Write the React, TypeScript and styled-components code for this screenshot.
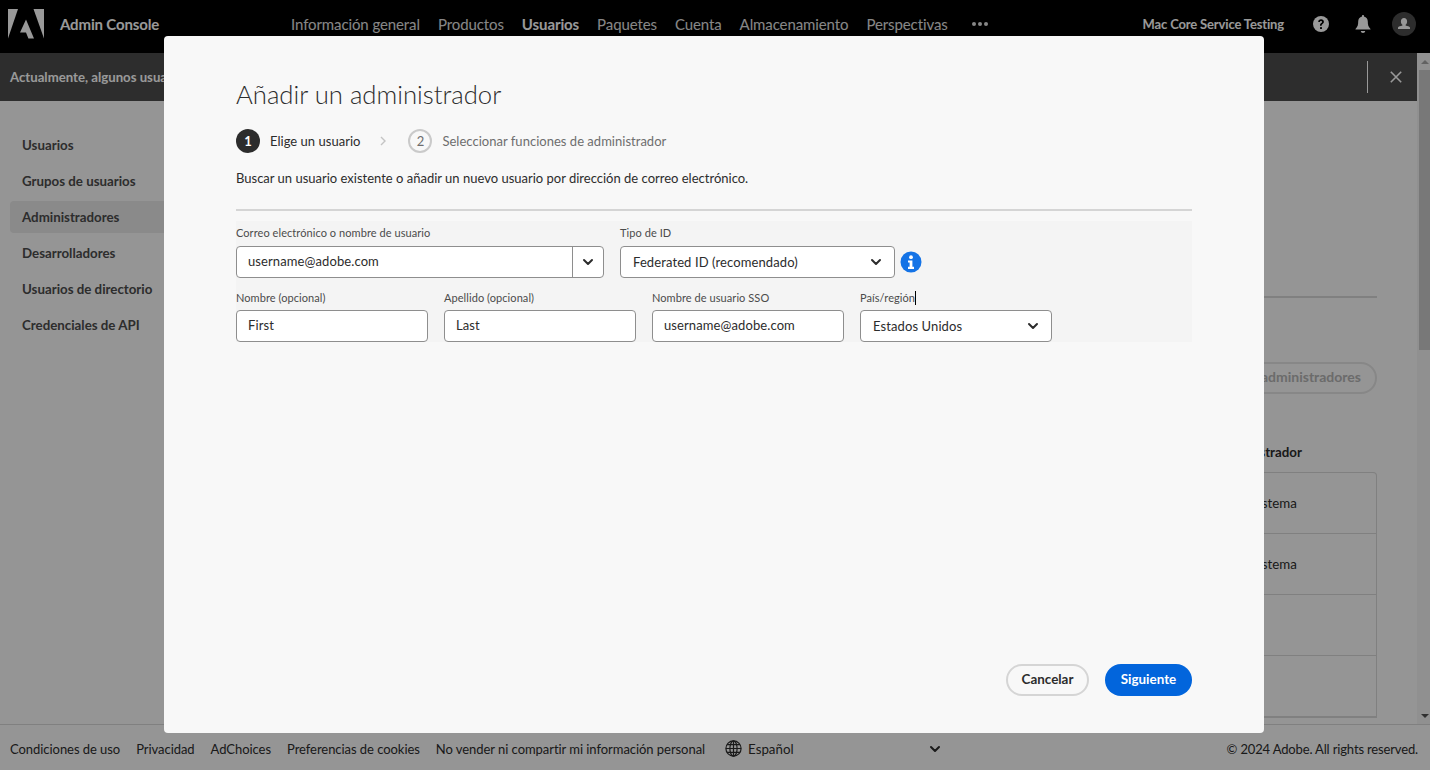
import React from 'react';
import styled, { createGlobalStyle } from 'styled-components';

const FONT = `Lato, "Noto Sans", sans-serif`;

const GlobalStyle = createGlobalStyle`
  html, body {
    margin: 0;
    padding: 0;
    height: 100%;
    overflow: hidden;
    background: #f8f8f8;
    font-family: ${FONT};
  }
  * {
    box-sizing: border-box;
  }
`;

const navItems = ['Información general', 'Productos', 'Usuarios', 'Paquetes', 'Cuenta', 'Almacenamiento', 'Perspectivas'];
const sideItems = ['Usuarios', 'Grupos de usuarios', 'Administradores', 'Desarrolladores', 'Usuarios de directorio', 'Credenciales de API'];
const footerLinks = ['Condiciones de uso', 'Privacidad', 'AdChoices', 'Preferencias de cookies', 'No vender ni compartir mi información personal'];
const tableRows = ['Administrador del sistema', 'Administrador del sistema', '', ''];

const Chevron = () => (
  <svg width="12" height="8" viewBox="0 0 12 8" fill="none">
    <path d="M2 2l4 4 4-4" stroke="#2c2c2c" strokeWidth="2" strokeLinecap="round" strokeLinejoin="round" />
  </svg>
);

const AdobeLogo = () => (
  <svg width="36" height="30" viewBox="0 0 36 30" fill="#fff">
    <path d="M0 0h10L0 29.5z" />
    <path d="M25.5 0H36v29.5z" />
    <path d="M18 10.5l8 19h-5.6l-2.4-6h-6z" />
  </svg>
);

const App: React.FC = () => {
  return (
    <Page>
      <GlobalStyle />
      <TopBar>
        <LogoLink>
          <AdobeLogo />
        </LogoLink>
        <Brand>Admin Console</Brand>
        <Nav>
          {navItems.map((item) => (
            <NavItem key={item} active={item === 'Usuarios'}>
              {item}
            </NavItem>
          ))}
          <MoreDots>
            <i />
            <i />
            <i />
          </MoreDots>
        </Nav>
        <TopRight>
          <OrgName>Mac Core Service Testing</OrgName>
          <svg width="18" height="18" viewBox="0 0 18 18">
            <circle cx="9" cy="9" r="8" fill="#fff" />
            <path d="M6.2 7c0-1.7 1.2-2.7 2.9-2.7s2.8 1 2.8 2.4c0 1.1-.6 1.7-1.4 2.3-.6.4-.9.8-.9 1.5v.3H8v-.5c0-1 .4-1.6 1.2-2.2.6-.4.8-.7.8-1.2 0-.6-.4-1-1-1-.7 0-1 .5-1.1 1.1z" fill="#000" />
            <rect x="8" y="12" width="2" height="2" rx=".4" fill="#000" />
          </svg>
          <BellWrap>
            <svg width="16" height="18" viewBox="0 0 16 18" fill="#fff">
              <path d="M8 0c.6 0 1 .4 1 1v.6c2.4.5 3.8 2.4 3.8 5 0 3.6.5 5 2.7 7.4v.6H.5V14c2.2-2.4 2.7-3.8 2.7-7.4 0-2.6 1.4-4.5 3.8-5V1c0-.6.4-1 1-1z" />
              <path d="M5.8 16h4.4c0 1.2-1 2-2.2 2s-2.2-.8-2.2-2z" />
            </svg>
          </BellWrap>
          <Avatar>
            <svg width="14" height="14" viewBox="0 0 14 14" fill="#fff">
              <path d="M7 1c1.9 0 3.1 1.4 3.1 3.4 0 1.4-.6 2.6-1.5 3.3v.9c1.9.5 3.9 1.2 4.4 1.8V12H1v-1.6c.5-.6 2.5-1.3 4.4-1.8v-.9c-.9-.7-1.5-1.9-1.5-3.3C3.9 2.4 5.1 1 7 1z" />
            </svg>
          </Avatar>
        </TopRight>
      </TopBar>
      <Middle>
        <Scroller>
          <Banner>
            <BannerText>Actualmente, algunos usuarios</BannerText>
            <BannerDivider />
            <BannerClose>
              <svg width="12" height="12" viewBox="0 0 12 12" stroke="#fff" strokeWidth="1.6">
                <path d="M.8.8l10.4 10.4M11.2.8.8 11.2" />
              </svg>
            </BannerClose>
          </Banner>
          <Columns>
            <Sidebar>
              {sideItems.map((item) => (
                <SideItem key={item} active={item === 'Administradores'}>
                  {item}
                </SideItem>
              ))}
            </Sidebar>
            <Main>
              <MainRule />
              <GhostButton>Añadir administradores</GhostButton>
              <TableHead>Tipo de administrador</TableHead>
              <Table>
                {tableRows.map((text, i) => (
                  <TableRow key={i}>{text}</TableRow>
                ))}
              </Table>
            </Main>
          </Columns>
        </Scroller>
        <Scrollbar>
          <ScrollArrow up />
          <ScrollThumb />
          <ScrollArrow />
        </Scrollbar>
      </Middle>
      <Footer>
        {footerLinks.map((link) => (
          <FooterLink key={link}>{link}</FooterLink>
        ))}
        <Language>
          <svg width="17" height="17" viewBox="0 0 17 17" fill="none" stroke="#2c2c2c" strokeWidth="1.2">
            <circle cx="8.5" cy="8.5" r="7.6" />
            <ellipse cx="8.5" cy="8.5" rx="3.6" ry="7.6" />
            <path d="M8.5.9v15.2M.9 8.5h15.2M2 4.6h13M2 12.4h13" />
          </svg>
          <span>Español</span>
          <LanguageChevron>
            <Chevron />
          </LanguageChevron>
        </Language>
        <Copyright>© 2024 Adobe. All rights reserved.</Copyright>
      </Footer>

      <Overlay>
        <Modal>
          <ModalTitle>Añadir un administrador</ModalTitle>
          <Steps>
            <StepCircle current>1</StepCircle>
            <StepLabel current>Elige un usuario</StepLabel>
            <StepArrow>
              <svg width="7" height="10" viewBox="0 0 7 10" fill="none" stroke="#c4c4c4" strokeWidth="1.4">
                <path d="M1 1l4 4-4 4" />
              </svg>
            </StepArrow>
            <StepCircle>2</StepCircle>
            <StepLabel>Seleccionar funciones de administrador</StepLabel>
          </Steps>
          <Description>Buscar un usuario existente o añadir un nuevo usuario por dirección de correo electrónico.</Description>
          <FormRule />
          <FormPanel>
            <FormRow>
              <Field width={368}>
                <FieldLabel raised>Correo electrónico o nombre de usuario</FieldLabel>
                <Combo>
                  <ComboValue>username@adobe.com</ComboValue>
                  <ComboButton>
                    <Chevron />
                  </ComboButton>
                </Combo>
              </Field>
              <Field width={275}>
                <FieldLabel raised>Tipo de ID</FieldLabel>
                <SelectBox>
                  <span>Federated ID (recomendado)</span>
                  <Chevron />
                </SelectBox>
              </Field>
              <InfoIcon>
                <svg width="22" height="22" viewBox="0 0 22 22">
                  <circle cx="11" cy="11" r="10.5" fill="#1473e6" />
                  <circle cx="11" cy="6.2" r="1.9" fill="#fff" />
                  <path d="M8 9.4h4.4v6.4H14V18H8v-2.2h1.6v-4.2H8z" fill="#fff" />
                </svg>
              </InfoIcon>
            </FormRow>
            <FormRow>
              <Field width={192}>
                <FieldLabel>Nombre (opcional)</FieldLabel>
                <TextBox>First</TextBox>
              </Field>
              <Field width={192}>
                <FieldLabel>Apellido (opcional)</FieldLabel>
                <TextBox>Last</TextBox>
              </Field>
              <Field width={192}>
                <FieldLabel>Nombre de usuario SSO</FieldLabel>
                <TextBox>username@adobe.com</TextBox>
              </Field>
              <Field width={192}>
                <FieldLabel>
                  País/región
                  <Caret />
                </FieldLabel>
                <SelectBox>
                  <span>Estados Unidos</span>
                  <Chevron />
                </SelectBox>
              </Field>
            </FormRow>
          </FormPanel>
          <ModalActions>
            <CancelButton>Cancelar</CancelButton>
            <NextButton>Siguiente</NextButton>
          </ModalActions>
        </Modal>
      </Overlay>
    </Page>
  );
};

const Page = styled.div`
  height: 100vh;
  display: flex;
  flex-direction: column;
  overflow: hidden;
  position: relative;
  background: #f8f8f8;
  color: #2c2c2c;
`;

const TopBar = styled.header`
  height: 53px;
  flex: none;
  background: #000;
  display: flex;
  align-items: center;
  padding: 0 14px 5px 8px;
  color: #fff;
`;

const LogoLink = styled.div`
  display: flex;
  width: 36px;
`;

const Brand = styled.div`
  margin-left: 16px;
  width: 231px;
  font-size: 15px;
  font-weight: 700;
  letter-spacing: -0.15px;
`;

const Nav = styled.nav`
  display: flex;
  align-items: center;
  gap: 18px;
`;

const NavItem = styled.div<{ active?: boolean }>`
  font-size: 15px;
  letter-spacing: -0.1px;
  font-weight: ${({ active }) => (active ? 700 : 400)};
  color: ${({ active }) => (active ? '#fff' : '#e1e1e1')};
  white-space: nowrap;
`;

const MoreDots = styled.div`
  display: flex;
  gap: 2px;
  margin-left: 6px;
  i {
    width: 4px;
    height: 4px;
    border-radius: 50%;
    background: #e1e1e1;
  }
`;

const TopRight = styled.div`
  margin-left: auto;
  display: flex;
  align-items: center;
`;

const OrgName = styled.div`
  font-size: 13px;
  font-weight: 700;
  letter-spacing: -0.15px;
  margin-right: 28px;
`;

const BellWrap = styled.div`
  display: flex;
  margin: 0 21px 0 25px;
`;

const Avatar = styled.div`
  width: 24px;
  height: 24px;
  border-radius: 50%;
  background: #4b4b4b;
  display: flex;
  align-items: center;
  justify-content: center;
`;

const Middle = styled.div`
  flex: 1;
  min-height: 0;
  display: flex;
`;

const Scroller = styled.div`
  flex: 1;
  min-width: 0;
  overflow: hidden;
`;

const Banner = styled.div`
  height: 48px;
  background: #4b4b4b;
  color: #fff;
  display: flex;
  align-items: center;
  padding-left: 10px;
  font-size: 13.2px;
  font-weight: 700;
`;

const BannerText = styled.div`
  flex: 1;
`;

const BannerDivider = styled.div`
  width: 1px;
  height: 32px;
  background: #fff;
`;

const BannerClose = styled.div`
  width: 49px;
  display: flex;
  justify-content: center;
  padding-left: 6px;
`;

const Columns = styled.div`
  display: flex;
`;

const Sidebar = styled.aside`
  width: 200px;
  flex: none;
  padding: 28px 10px 0;
  display: flex;
  flex-direction: column;
  gap: 4px;
`;

const SideItem = styled.div<{ active?: boolean }>`
  height: 32px;
  border-radius: 4px;
  padding-left: 12px;
  display: flex;
  align-items: center;
  font-size: 13.3px;
  font-weight: 700;
  color: #4b4b4b;
  background: ${({ active }) => (active ? '#e6e6e6' : 'transparent')};
`;

const Main = styled.main`
  flex: 1;
  min-width: 0;
  padding: 195px 40px 0 400px;
  display: flex;
  flex-direction: column;
`;

const MainRule = styled.div`
  height: 2px;
  background: #d5d5d5;
`;

const GhostButton = styled.div`
  align-self: flex-end;
  margin-top: 64px;
  height: 32px;
  border: 2px solid #e1e1e1;
  border-radius: 16px;
  padding: 0 14px 3px;
  display: flex;
  align-items: center;
  font-size: 14px;
  font-weight: 700;
  color: #b3b3b3;
  white-space: nowrap;
`;

const TableHead = styled.div`
  margin-top: 49px;
  padding-left: 572px;
  height: 20px;
  line-height: 18px;
  font-size: 13.3px;
  font-weight: 700;
  color: #2c2c2c;
  white-space: nowrap;
`;

const Table = styled.div`
  margin-top: 9px;
  border: 1px solid #d5d5d5;
  border-left: 0;
  border-radius: 0 4px 0 0;
`;

const TableRow = styled.div`
  height: 61px;
  padding: 0 0 1px 546px;
  display: flex;
  align-items: center;
  font-size: 13.3px;
  border-bottom: 1px solid #d5d5d5;
  color: #2c2c2c;
  white-space: nowrap;
`;

const Scrollbar = styled.div`
  width: 13px;
  flex: none;
  padding-left: 2px;
  background: #f1f1f1;
  display: flex;
  flex-direction: column;
`;

const ScrollArrow = styled.div<{ up?: boolean }>`
  height: 17px;
  flex: none;
  margin-top: ${({ up }) => (up ? '0' : 'auto')};
  display: flex;
  align-items: center;
  justify-content: center;
  &::before {
    content: '';
    border-left: 4px solid transparent;
    border-right: 4px solid transparent;
    ${({ up }) => (up ? 'border-bottom: 4px solid #a3a3a3;' : 'border-top: 4px solid #505050;')}
  }
`;

const ScrollThumb = styled.div`
  height: 280px;
  background: #c8c8c8;
`;

const Footer = styled.footer`
  height: 46px;
  flex: none;
  border-top: 1px solid #d5d5d5;
  display: flex;
  align-items: center;
  padding: 2px 12px 0 10px;
  gap: 16px;
  font-size: 13px;
  color: #2c2c2c;
`;

const FooterLink = styled.div`
  white-space: nowrap;
  letter-spacing: -0.05px;
`;

const Language = styled.div`
  width: 216px;
  margin-left: 4px;
  display: flex;
  align-items: center;
  gap: 6px;
  font-size: 13.3px;
`;

const LanguageChevron = styled.div`
  display: flex;
  margin-left: auto;
`;

const Copyright = styled.div`
  margin-left: auto;
  white-space: nowrap;
  letter-spacing: -0.15px;
`;

const Overlay = styled.div`
  position: absolute;
  inset: 0;
  background: rgba(0, 0, 0, 0.4);
`;

const Modal = styled.div`
  position: absolute;
  left: 164px;
  top: 36px;
  width: 1100px;
  height: 697px;
  background: #f8f8f8;
  border-radius: 4px;
  padding: 40px 72px 37px;
  display: flex;
  flex-direction: column;
`;

const ModalTitle = styled.h2`
  margin: 0;
  height: 36px;
  line-height: 36px;
  font-size: 25.7px;
  font-weight: 300;
  color: #2c2c2c;
`;

const Steps = styled.div`
  margin-top: 17px;
  height: 24px;
  display: flex;
  align-items: center;
`;

const StepCircle = styled.div<{ current?: boolean }>`
  width: 24px;
  height: 24px;
  border-radius: 50%;
  display: flex;
  align-items: center;
  justify-content: center;
  font-size: 13px;
  font-weight: ${({ current }) => (current ? 700 : 400)};
  color: ${({ current }) => (current ? '#fff' : '#6e6e6e')};
  background: ${({ current }) => (current ? '#2c2c2c' : 'transparent')};
  border: ${({ current }) => (current ? '0' : '2px solid #cacaca')};
`;

const StepLabel = styled.div<{ current?: boolean }>`
  margin-left: 10px;
  font-size: 13px;
  letter-spacing: 0.02px;
  color: ${({ current }) => (current ? '#2c2c2c' : '#6e6e6e')};
`;

const StepArrow = styled.div`
  display: flex;
  margin: 0 21px 0 20px;
`;

const Description = styled.p`
  margin: 15px 0 0;
  line-height: 20px;
  font-size: 13px;
  color: #2c2c2c;
`;

const FormRule = styled.div`
  margin-top: 21px;
  height: 2px;
  flex: none;
  background: #d5d5d5;
`;

const FormPanel = styled.div`
  margin-top: 10px;
  height: 121px;
  padding-top: 1px;
  background: #f4f4f4;
  display: flex;
  flex-direction: column;
  gap: 8px;
`;

const FormRow = styled.div`
  display: flex;
  align-items: flex-end;
  gap: 16px;
`;

const Field = styled.div<{ width: number }>`
  width: ${({ width }) => width}px;
  flex: none;
`;

const FieldLabel = styled.div<{ raised?: boolean }>`
  height: 24px;
  line-height: ${({ raised }) => (raised ? '21px' : '24px')};
  font-size: 11px;
  letter-spacing: 0.07px;
  color: #4b4b4b;
  white-space: nowrap;
`;

const Caret = styled.span`
  display: inline-block;
  width: 1px;
  height: 14px;
  background: #000;
  vertical-align: -3px;
`;

const TextBox = styled.div`
  height: 32px;
  border: 1px solid #8e8e8e;
  border-radius: 4px;
  background: #fff;
  padding: 0 11px 2px;
  display: flex;
  align-items: center;
  font-size: 13px;
  letter-spacing: 0.1px;
  color: #2c2c2c;
  white-space: nowrap;
`;

const Combo = styled(TextBox)`
  padding: 0;
`;

const ComboValue = styled.div`
  flex: 1;
  padding: 0 0 2px 11px;
`;

const ComboButton = styled.div`
  width: 31px;
  height: 100%;
  border-left: 1px solid #8e8e8e;
  display: flex;
  align-items: center;
  justify-content: center;
`;

const SelectBox = styled(TextBox)`
  justify-content: space-between;
  padding: 0 12px 0;
  span {
    padding-bottom: 1px;
  }
`;

const InfoIcon = styled.div`
  display: flex;
  margin: 0 0 5px -11px;
`;

const ModalActions = styled.div`
  margin-top: auto;
  display: flex;
  justify-content: flex-end;
  gap: 16px;
`;

const CancelButton = styled.button`
  height: 32px;
  width: 83px;
  border: 2px solid #d5d5d5;
  border-radius: 16px;
  padding: 0 0 2px;
  background: transparent;
  font-family: ${FONT};
  font-size: 13.4px;
  font-weight: 700;
  color: #2c2c2c;
`;

const NextButton = styled.button`
  height: 32px;
  width: 87px;
  border: 0;
  border-radius: 16px;
  padding: 0 0 2px;
  background: #0265dc;
  font-family: ${FONT};
  font-size: 13.4px;
  font-weight: 700;
  color: #fff;
`;

export default App;
